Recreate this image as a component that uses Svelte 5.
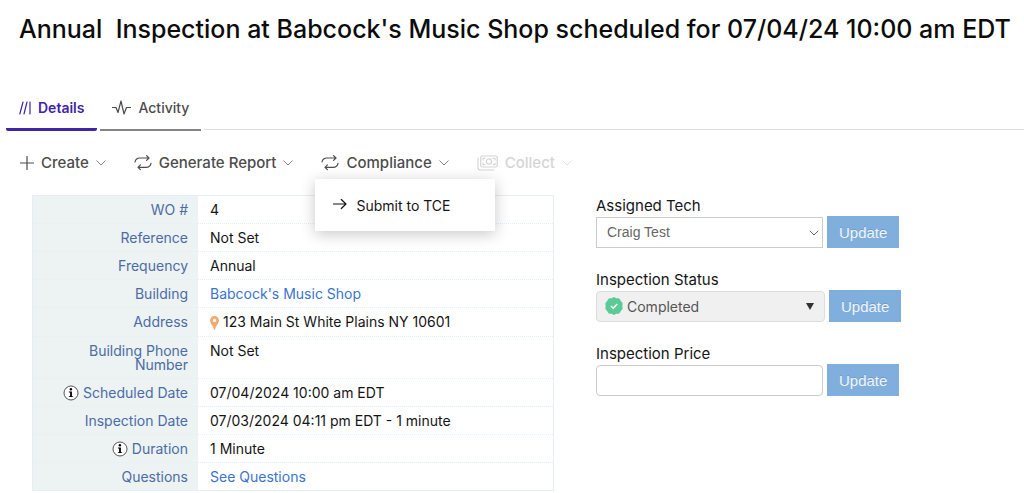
<script>
  let tech = $state('Craig Test');
  let status = $state('Completed');
  let price = $state('');
</script>

{#snippet chevron()}
  <svg class="chevron" width="10" height="6" viewBox="0 0 10 6" aria-hidden="true"><path d="M.8.8 5 5 9.2.8" /></svg>
{/snippet}

{#snippet cycle()}
  <svg width="18" height="18" viewBox="0 0 18 18" aria-hidden="true">
    <path d="M1 8C1.500 5.300 3.500 4 6 4h9M12.600 1.600 15 4l-2.400 2.400M17 9.300c-.5 2.700-2.500 4-5 4H4M6.400 10.900 4 13.300l2.400 2.400" />
  </svg>
{/snippet}

{#snippet info()}
  <svg class="info" width="16" height="16" viewBox="0 0 16 16" aria-hidden="true">
    <circle cx="8" cy="8" r="7" fill="#fff" stroke="#555" />
    <circle cx="7.9" cy="4.3" r="1.2" />
    <path d="M5.900 6.500h3v4.700h1.200v.9H5.900v-.9h1.200V7.400H5.900z" />
  </svg>
{/snippet}

<main>
  <h1>Annual&nbsp; Inspection at Babcock's Music Shop scheduled for 07/04/24 10:00 am EDT</h1>

  <nav class="tabs">
    <a class="tab active" href="#details">
      <svg width="12" height="14" viewBox="0 0 12 14" aria-hidden="true"><path d="M.8 13 4 1M5 13 8 1M11 1v12" /></svg>
      Details
    </a>
    <a class="tab" href="#activity">
      <svg width="19" height="16" viewBox="0 0 19 16" aria-hidden="true"><path d="M.5 7.500H4l2 5L9 1l3 13 2.500-6.500h4" /></svg>
      Activity
    </a>
    <span class="rest"></span>
  </nav>

  <div class="toolbar">
    <button class="tool">
      <svg width="14" height="14" viewBox="0 0 14 14" aria-hidden="true"><path d="M7 .5v13M.5 7h13" /></svg>
      Create {@render chevron()}
    </button>
    <button class="tool">{@render cycle()} Generate Report {@render chevron()}</button>
    <div class="holder">
      <button class="tool" aria-expanded="true">{@render cycle()} Compliance {@render chevron()}</button>
      <div class="menu">
        <button class="item">
          <svg width="14" height="12" viewBox="0 0 14 12" aria-hidden="true"><path d="M.5 5h12.500M8.300.5 13 5l-4.700 4.500" /></svg>
          Submit to TCE
        </button>
      </div>
    </div>
    <button class="tool" disabled>
      <svg width="21" height="16" viewBox="0 0 21 16" aria-hidden="true">
        <rect x="3.7" y="1" width="16.5" height="11" rx="1.5" />
        <circle cx="12" cy="6.5" r="2.6" />
        <path d="M1 3v9.500A2.500 2.500 0 0 0 3.500 15H17M6 5V3.300h2M18 5V3.300h-2M6 8v1.700h2M18 8v1.700h-2" />
      </svg>
      Collect {@render chevron()}
    </button>
  </div>

  <div class="content">
    <table>
      <tbody>
        <tr><th scope="row">WO #</th><td>4</td></tr>
        <tr><th scope="row">Reference</th><td>Not Set</td></tr>
        <tr><th scope="row">Frequency</th><td>Annual</td></tr>
        <tr><th scope="row">Building</th><td><a href="#building">Babcock's Music Shop</a></td></tr>
        <tr>
          <th scope="row">Address</th>
          <td>
            <svg class="pin" width="9" height="14" viewBox="0 0 9 14" aria-hidden="true">
              <path fill-rule="evenodd" d="M4.500 0A4.400 4.400 0 0 0 0 4.400C0 7.500 3 9 4 13.500q.5.800 1 0C6 9 9 7.500 9 4.400A4.400 4.400 0 0 0 4.500 0Zm0 2.700a1.700 1.700 0 1 1 0 3.400 1.700 1.700 0 0 1 0-3.400Z" />
            </svg>
            123 Main St White Plains NY 10601
          </td>
        </tr>
        <tr><th scope="row">Building Phone Number</th><td>Not Set</td></tr>
        <tr><th scope="row">{@render info()} Scheduled Date</th><td>07/04/2024 10:00 am EDT</td></tr>
        <tr><th scope="row">Inspection Date</th><td>07/03/2024 04:11 pm EDT - 1 minute</td></tr>
        <tr><th scope="row">{@render info()} Duration</th><td>1 Minute</td></tr>
        <tr><th scope="row">Questions</th><td><a href="#questions">See Questions</a></td></tr>
      </tbody>
    </table>

    <form onsubmit={(e) => e.preventDefault()}>
      <div class="field">
        <label for="tech">Assigned Tech</label>
        <div class="line">
          <div class="control">
            <select id="tech" bind:value={tech}><option>Craig Test</option></select>
            <svg class="arrow" width="10" height="6" viewBox="0 0 10 6" aria-hidden="true"><path d="M.8.8 5 5 9.200.8" /></svg>
          </div>
          <button class="update">Update</button>
        </div>
      </div>
      <div class="field">
        <label for="status">Inspection Status</label>
        <div class="line">
          <div class="control wide">
            <select id="status" class="status" bind:value={status}><option>Completed</option></select>
            <svg class="badge" width="18" height="18" viewBox="0 0 18 18" aria-hidden="true">
              <path fill="#5bcb96" stroke="#5bcb96" stroke-width="2" stroke-linejoin="round" d="M9 1l2.100 1.300 2.500 0 1.300 2.100L16.600 6.300 16.400 9l.2 2.700-1.700 1.900-1.300 2.100h-2.500L9 17l-2.100-1.300H4.400l-1.300-2.100-1.700-1.900L1.600 9 1.400 6.300l1.700-1.900 1.300-2.100h2.500z" />
              <path fill="none" stroke="#fff" stroke-width="1.600" d="m6 9 2.200 2.200L12.200 7" />
            </svg>
            <svg class="solid" width="8" height="7" viewBox="0 0 8 7" aria-hidden="true"><path d="M0 0h8L4 7z" /></svg>
          </div>
          <button class="update">Update</button>
        </div>
      </div>
      <div class="field">
        <label for="price">Inspection Price</label>
        <div class="line">
          <div class="control"><input id="price" type="text" bind:value={price} /></div>
          <button class="update">Update</button>
        </div>
      </div>
    </form>
  </div>
</main>

<style>
  :global(body) {
    margin: 0;
    background: #fff;
  }
  main {
    font-family: Inter, sans-serif;
    font-size: 14px;
    color: #151515;
  }
  h1 {
    margin: 0;
    padding: 13px 0 0 19px;
    font-size: 25px;
    line-height: 32px;
    font-weight: 500;
    color: #0c0c0c;
  }
  button {
    font: inherit;
    border: 0;
    cursor: pointer;
  }
  a {
    color: #3b73d1;
    text-decoration: none;
  }
  .tabs {
    display: flex;
    gap: 3px;
    margin-top: 43px;
    padding-left: 6px;
  }
  .tab {
    display: flex;
    align-items: center;
    gap: 7px;
    box-sizing: border-box;
    height: 43px;
    padding: 0 12px 2px;
    color: #4c4c4c;
    font-weight: 500;
    border-bottom: 2px solid #858585;
  }
  .tab.active {
    padding: 0 13px 1px;
    color: #4025a5;
    font-weight: 600;
    border-bottom: 3px solid #4025a5;
    border-radius: 2px;
  }
  .tab svg,
  .tool svg,
  .item svg {
    flex: none;
    fill: none;
    stroke: currentColor;
    stroke-width: 1.2;
    stroke-linecap: round;
    stroke-linejoin: round;
  }
  .rest {
    flex: 1;
    border-bottom: 1px solid #ddd;
    margin-bottom: 1px;
  }
  .toolbar {
    display: flex;
    gap: 28px;
    padding: 21px 20px 0;
  }
  .tool {
    display: flex;
    align-items: center;
    gap: 7px;
    padding: 0;
    background: none;
    color: #4c4c4c;
    font-size: 15px;
    font-weight: 500;
    line-height: 21px;
    white-space: nowrap;
  }
  .tool:disabled {
    color: #d5d5d5;
    cursor: default;
  }
  .tool .chevron {
    stroke-width: 1;
    opacity: 0.7;
  }
  .holder {
    position: relative;
  }
  .menu {
    position: absolute;
    z-index: 2;
    top: 27px;
    left: -6px;
    width: 180px;
    background: #fff;
    box-shadow: 0 3px 14px rgba(0, 0, 0, 0.22);
  }
  .item {
    display: flex;
    align-items: center;
    gap: 9px;
    width: 100%;
    height: 52px;
    padding: 0 18px;
    background: none;
    color: #151515;
  }
  .content {
    display: flex;
    align-items: flex-start;
    gap: 42px;
    padding: 22px 20px 0 32px;
  }
  table {
    flex: 0 1 522px;
    border-collapse: collapse;
    border: 1px solid #e3eef7;
    line-height: 14px;
  }
  tr {
    height: 28px;
    border-bottom: 1px dotted #e3eef7;
  }
  th {
    width: 145px;
    padding: 7px 10px 6px;
    background: #edf2f3;
    color: #4b6ca5;
    font-weight: 400;
    text-align: right;
    vertical-align: top;
  }
  td {
    padding: 7px 12px 6px;
    vertical-align: top;
  }
  .pin {
    fill: #f3aa70;
    vertical-align: -3px;
  }
  .info {
    margin: -3px 0;
  }
  form {
    flex: 1;
    display: flex;
    flex-direction: column;
    gap: 21px;
  }
  .field label {
    display: block;
    font-size: 15px;
    line-height: 21px;
  }
  .line {
    display: flex;
    align-items: center;
    gap: 4px;
  }
  .control {
    position: relative;
    flex: 0 1 227px;
  }
  .control.wide {
    flex-basis: 229px;
  }
  select,
  input {
    display: block;
    appearance: none;
    box-sizing: border-box;
    width: 100%;
    height: 31px;
    padding: 0 10px;
    border: 1px solid #ccc;
    border-radius: 0;
    background: #fff;
    color: #666;
    font: 14px 'Liberation Sans', Arial, sans-serif;
  }
  input {
    border-radius: 4px;
  }
  select.status {
    padding-left: 30px;
    border-color: #ddd;
    border-radius: 4px;
    background: #f0f0f0;
    color: #555;
    font-family: Inter, sans-serif;
  }
  .arrow,
  .badge,
  .solid {
    position: absolute;
    pointer-events: none;
  }
  .arrow {
    right: 4px;
    top: 13px;
    fill: none;
    stroke: #666;
  }
  .badge {
    left: 9px;
    top: 6px;
  }
  .solid {
    right: 11px;
    top: 12px;
    fill: #333;
  }
  .update {
    height: 32px;
    padding: 0 12px;
    background: #80afde;
    color: #f0f5fa;
    font: 15px 'Liberation Sans', Arial, sans-serif;
    text-shadow: 0 -1px 0 rgba(0, 0, 0, 0.15);
  }
</style>
